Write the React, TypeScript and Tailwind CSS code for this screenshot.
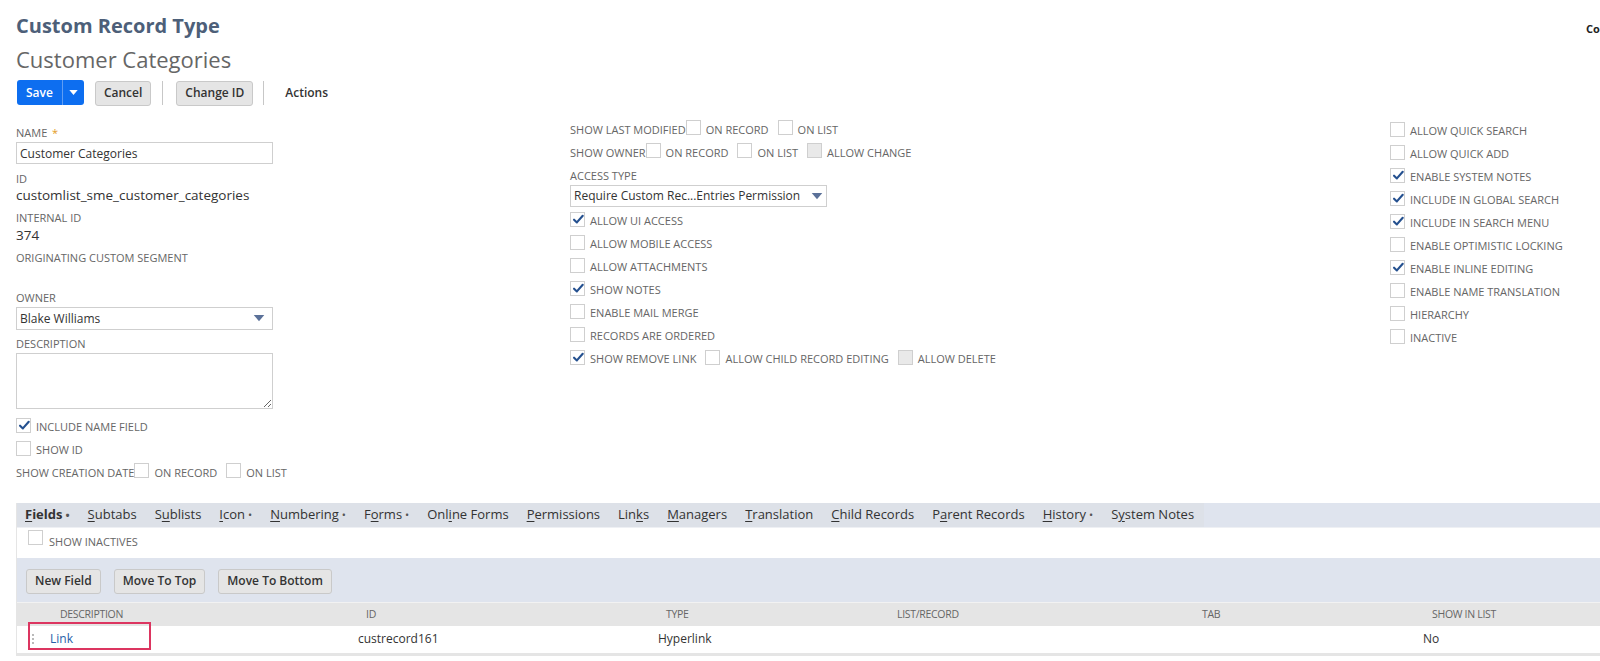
import React from 'react';

const font = "font-['Open_Sans','Liberation_Sans',sans-serif]";

const Check = ({ checked = false, disabled = false, className = '' }: { checked?: boolean; disabled?: boolean; className?: string }) => (
  <span
    className={`relative inline-block w-[15px] h-[15px] shrink-0 border border-[#cfcfcf] ${disabled ? 'bg-[#e9e9e9]' : 'bg-white'} ${className}`}
  >
    {checked && (
      <svg viewBox="0 0 16 16" className="absolute left-[1px] top-[0px] w-[13px] h-[13px]">
        <path d="M2.5 8.2 L6 11.6 L13.2 3.4" fill="none" stroke="#24508f" strokeWidth="2.6" strokeLinecap="round" strokeLinejoin="round" />
      </svg>
    )}
  </span>
);

const Txt = ({ children, className = '' }: { children: React.ReactNode; className?: string }) => (
  <span className={`text-[11px] text-[#666] uppercase pt-[3px] whitespace-nowrap ${className}`}>{children}</span>
);

const CheckRow = ({ label, checked }: { label: string; checked?: boolean }) => (
  <div className="flex items-center h-[23px] gap-[5px]">
    <Check checked={checked} />
    <Txt>{label}</Txt>
  </div>
);

const Label = ({ children, className = '' }: { children: React.ReactNode; className?: string }) => (
  <div className={`text-[11px] leading-[14px] text-[#666] uppercase ${className}`}>{children}</div>
);

const Caret = () => (
  <svg viewBox="0 0 12 8" className="w-[12px] h-[7px]">
    <path d="M0 0 H12 L6 7 Z" fill="#5b7199" />
  </svg>
);

const GrayButton = ({ children }: { children: React.ReactNode }) => (
  <button className="h-[25px] px-[8px] rounded-[3px] border border-[#c9c9c9] bg-[#e5e5e5] text-[12px] font-semibold text-[#333]">
    {children}
  </button>
);

const tabs: { name: string; u: number; dot?: boolean }[] = [
  { name: 'Fields', u: 0, dot: true },
  { name: 'Subtabs', u: 0 },
  { name: 'Sublists', u: 1 },
  { name: 'Icon', u: 0, dot: true },
  { name: 'Numbering', u: 0, dot: true },
  { name: 'Forms', u: 1, dot: true },
  { name: 'Online Forms', u: 3 },
  { name: 'Permissions', u: 0 },
  { name: 'Links', u: 3 },
  { name: 'Managers', u: 0 },
  { name: 'Translation', u: 0 },
  { name: 'Child Records', u: 0 },
  { name: 'Parent Records', u: 1 },
  { name: 'History', u: 0, dot: true },
  { name: 'System Notes', u: 1 },
];

const cols = 'grid grid-cols-[341px_300px_231px_305px_229px_1fr]';

export default function App() {
  return (
    <div className={`${font} relative w-[1600px] h-[661px] bg-white overflow-hidden text-[#333]`}>
      <div className="absolute left-[1586px] top-[21px] text-[11px] font-bold text-[#222] whitespace-nowrap">Co</div>

      <div className="pl-[16px] pt-[13px]">
        <h1 className="text-[20px] leading-[26px] font-bold text-[#4d5f79]">Custom Record Type</h1>
        <h2 className="text-[22px] leading-[30px] text-[#666] mt-[5px]">Customer Categories</h2>

        {/* buttons */}
        <div className="flex items-center mt-[6px] h-[25px]">
          <div className="flex h-[25px] rounded-[3px] bg-[#0d6ef0] text-white text-[12px] font-semibold ml-[1px]">
            <span className="px-[9px] flex items-center">Save</span>
            <span className="w-[22px] border-l border-[#5f9df3] flex items-center justify-center">
              <svg viewBox="0 0 10 6" className="w-[9px] h-[5px]">
                <path d="M0 0 H10 L5 6 Z" fill="white" />
              </svg>
            </span>
          </div>
          <div className="ml-[11px]"><GrayButton>Cancel</GrayButton></div>
          <div className="w-px h-[24px] bg-[#c7c7c7] ml-[11px]" />
          <div className="ml-[13px]"><GrayButton>Change ID</GrayButton></div>
          <div className="w-px h-[24px] bg-[#c7c7c7] ml-[10px]" />
          <span className="ml-[21px] text-[12px] font-semibold text-[#333]">Actions</span>
        </div>

        {/* form columns */}
        <div className="flex mt-[12px]">
          {/* left */}
          <div className="w-[554px] shrink-0 pt-[9px]">
            <Label>
              Name <span className="text-[#e39b25] ml-[2px]">*</span>
            </Label>
            <input
              className="block mt-[2px] w-[257px] h-[22px] border border-[#cfcfcf] px-[3px] text-[12px] text-[#333] outline-none"
              defaultValue="Customer Categories"
            />
            <Label className="mt-[8px]">ID</Label>
            <div className="text-[13.5px] leading-[17px] mt-[1px]">customlist_sme_customer_categories</div>
            <Label className="mt-[7px]">Internal ID</Label>
            <div className="text-[13.5px] leading-[17px] mt-[2px]">374</div>
            <Label className="mt-[7px]">Originating Custom Segment</Label>
            <Label className="mt-[26px]">Owner</Label>
            <div className="mt-[2px] w-[257px] h-[23px] border border-[#cfcfcf] flex items-center justify-between px-[3px] pr-[7px]">
              <span className="text-[12px] text-[#333]">Blake Williams</span>
              <Caret />
            </div>
            <Label className="mt-[7px]">Description</Label>
            <textarea className="block mt-[2px] w-[257px] h-[56px] border border-[#cfcfcf] resize-y outline-none" />
            <div className="mt-[5px]">
              <CheckRow label="Include Name Field" checked />
              <CheckRow label="Show ID" />
              <div className="flex items-center h-[23px]">
                <Txt>Show Creation Date</Txt>
                <Check className="-mt-[3px]" />
                <Txt className="ml-[5px]">On Record</Txt>
                <Check className="-mt-[3px] ml-[9px]" />
                <Txt className="ml-[5px]">On List</Txt>
              </div>
            </div>
          </div>

          {/* middle */}
          <div className="w-[820px] shrink-0">
            <div className="flex items-center h-[23px]">
              <Txt>Show Last Modified</Txt>
              <Check className="-mt-[3px]" />
              <Txt className="ml-[5px]">On Record</Txt>
              <Check className="-mt-[3px] ml-[9px]" />
              <Txt className="ml-[5px]">On List</Txt>
            </div>
            <div className="flex items-center h-[23px]">
              <Txt>Show Owner</Txt>
              <Check className="-mt-[3px]" />
              <Txt className="ml-[5px]">On Record</Txt>
              <Check className="-mt-[3px] ml-[9px]" />
              <Txt className="ml-[5px]">On List</Txt>
              <Check className="-mt-[3px] ml-[9px]" disabled />
              <Txt className="ml-[5px]">Allow Change</Txt>
            </div>
            <Label className="mt-[6px]">Access Type</Label>
            <div className="mt-[2px] w-[257px] h-[22px] border border-[#cfcfcf] flex items-center px-[3px]">
              <span className="text-[12px] text-[#333] whitespace-nowrap">Require Custom Rec...Entries Permission</span>
              <span className="ml-[11px] flex"><Caret /></span>
            </div>
            <div className="mt-[1px]">
              <CheckRow label="Allow UI Access" checked />
              <CheckRow label="Allow Mobile Access" />
              <CheckRow label="Allow Attachments" />
              <CheckRow label="Show Notes" checked />
              <CheckRow label="Enable Mail Merge" />
              <CheckRow label="Records Are Ordered" />
              <div className="flex items-center h-[23px] gap-[5px]">
                <Check checked />
                <Txt>Show Remove Link</Txt>
                <Check className="ml-[4px]" />
                <Txt>Allow Child Record Editing</Txt>
                <Check className="ml-[4px]" disabled />
                <Txt>Allow Delete</Txt>
              </div>
            </div>
          </div>

          {/* right */}
          <div className="pt-[1px] shrink-0">
            <CheckRow label="Allow Quick Search" />
            <CheckRow label="Allow Quick Add" />
            <CheckRow label="Enable System Notes" checked />
            <CheckRow label="Include in Global Search" checked />
            <CheckRow label="Include in Search Menu" checked />
            <CheckRow label="Enable Optimistic Locking" />
            <CheckRow label="Enable Inline Editing" checked />
            <CheckRow label="Enable Name Translation" />
            <CheckRow label="Hierarchy" />
            <CheckRow label="Inactive" />
          </div>
        </div>

        {/* subtabs section */}
        <div className="mt-[20px] border-l border-[#e5e5e5]">
          <div className="flex h-[25px] bg-[#dfe4ee] border-b border-[#eef0f4]">
            <div className="flex items-center bg-[#dde1e8] pl-[8px] pr-[10px] gap-[18px]">
              {tabs.map((t, i) => (
                <span key={t.name} className={`text-[13px] text-[#333] whitespace-nowrap ${i === 0 ? 'font-bold' : ''}`}>
                  {t.name.slice(0, t.u)}
                  <span className="underline underline-offset-2">{t.name[t.u]}</span>
                  {t.name.slice(t.u + 1)}
                  {t.dot && <span className="ml-[3px] text-[11px] text-[#555]">•</span>}
                </span>
              ))}
            </div>
          </div>
          <div className="h-[30px] flex items-start pt-[2px] pl-[11px] gap-[6px]">
            <Check />
            <span className="text-[11px] text-[#666] uppercase pt-[4px]">Show Inactives</span>
          </div>
          <div className="h-[44px] bg-[#dfe4ee] flex items-center pl-[9px] gap-[13px] pt-[2px]">
            <GrayButton>New Field</GrayButton>
            <GrayButton>Move To Top</GrayButton>
            <GrayButton>Move To Bottom</GrayButton>
          </div>
          <div className={`${cols} h-[24px] bg-[#e5e5e5] border-t border-[#f2f2f2] items-center text-[10.5px] text-[#666] uppercase tracking-[-0.3px]`}>
            <span className="pl-[43px]">Description</span>
            <span className="pl-[8px]">ID</span>
            <span className="pl-[8px]">Type</span>
            <span className="pl-[8px]">List/Record</span>
            <span className="pl-[8px]">Tab</span>
            <span className="pl-[9px]">Show in List</span>
          </div>
          <div className={`${cols} h-[30px] items-center text-[12px] text-[#333] border-b-[3px] border-[#e5e5e5] pb-[2px]`}>
            <span className="relative pl-[11px] flex items-center h-full">
              <span className="absolute left-[11px] top-[-4px] w-[123px] h-[28px] border-2 border-[#dc3560]" />
              <svg viewBox="0 0 6 10" className="w-[6px] h-[10px]">
                <circle cx="1" cy="1" r="0.9" fill="#999" />
                <circle cx="5" cy="1" r="0.9" fill="#999" />
                <circle cx="1" cy="5" r="0.9" fill="#999" />
                <circle cx="5" cy="5" r="0.9" fill="#999" />
                <circle cx="1" cy="9" r="0.9" fill="#999" />
                <circle cx="5" cy="9" r="0.9" fill="#999" />
              </svg>
              <span className="ml-[16px] text-[#255ea8]">Link</span>
            </span>
            <span>custrecord161</span>
            <span>Hyperlink</span>
            <span />
            <span />
            <span>No</span>
          </div>
        </div>
      </div>
    </div>
  );
}
